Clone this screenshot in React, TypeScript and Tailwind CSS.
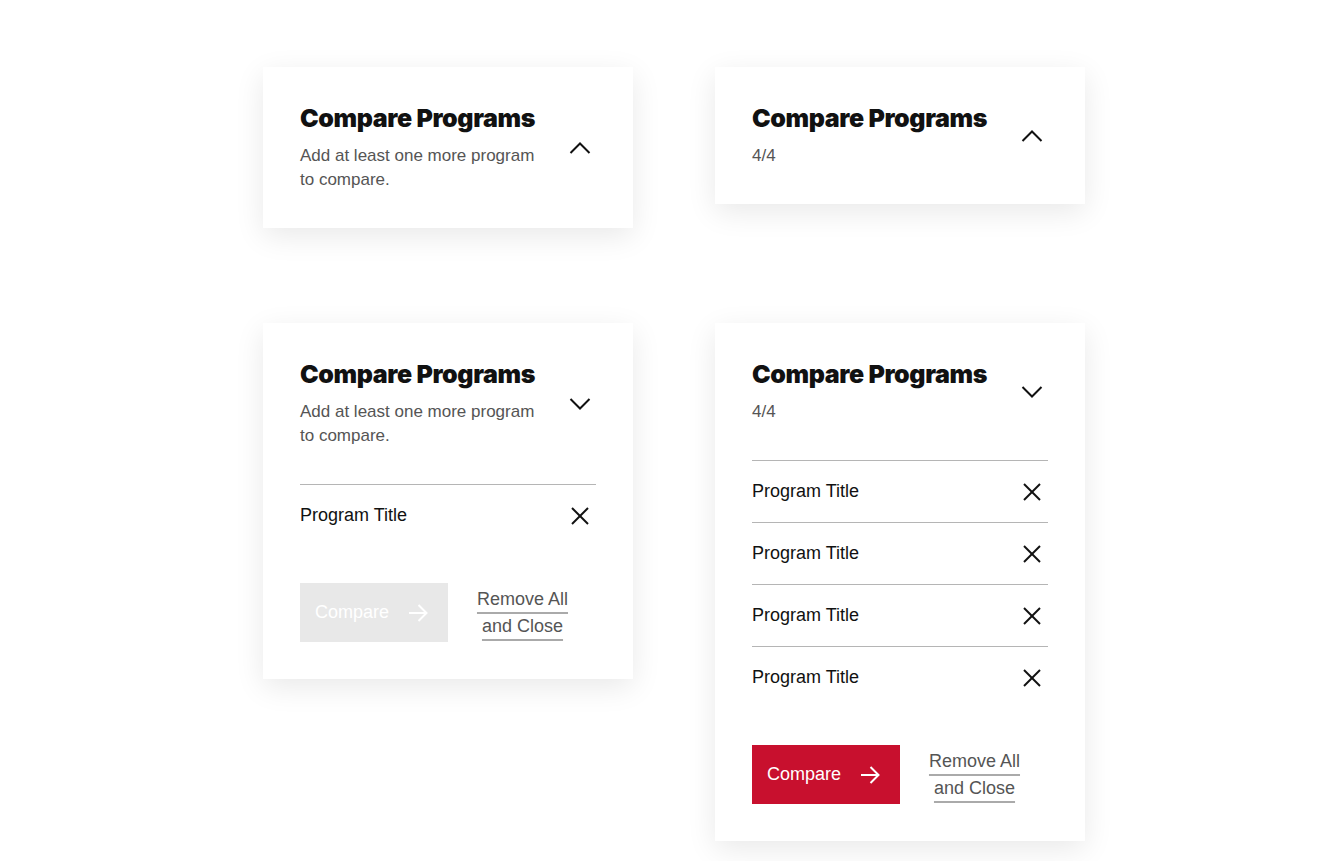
const body = { fontFamily: '"Liberation Sans", Arial, sans-serif' };
const heading = { fontFamily: 'Inter, "Liberation Sans", sans-serif' };

function Chevron({ up }: { up: boolean }) {
  return (
    <svg width="22" height="12" viewBox="0 0 22 12" fill="none" stroke="#111" strokeWidth="2" className={up ? '' : 'rotate-180'}>
      <polyline points="1.5,11 11,1.5 20.5,11" />
    </svg>
  );
}

function CloseIcon() {
  return (
    <svg width="18" height="18" viewBox="0 0 18 18" fill="none" stroke="#111" strokeWidth="2">
      <line x1="1" y1="1" x2="17" y2="17" />
      <line x1="17" y1="1" x2="1" y2="17" />
    </svg>
  );
}

function Arrow() {
  return (
    <svg width="19" height="18" viewBox="0 0 19 18" fill="none" stroke="currentColor" strokeWidth="2">
      <line x1="0" y1="9" x2="17.5" y2="9" />
      <polyline points="9.5,1 17.5,9 9.5,17" />
    </svg>
  );
}

interface CardProps {
  subtitle: string;
  open: boolean;
  items?: number;
  active?: boolean;
}

function CompareCard({ subtitle, open, items = 0, active = false }: CardProps) {
  return (
    <div className="bg-white w-[370px] px-[37px] shadow-[0_8px_28px_rgba(0,0,0,0.09)]" style={body}>
      <div className="flex items-center justify-between pt-9 pb-9">
        <div className="w-[250px]">
          <h2 className="text-[25px] leading-[30px] font-black tracking-[-0.015em] text-[#111]" style={heading}>
            Compare Programs
          </h2>
          <p className="mt-[11px] text-[17px] leading-6 text-[#555]">{subtitle}</p>
        </div>
        <div className="w-6 flex justify-center mr-1">
          <Chevron up={!open} />
        </div>
      </div>
      {open && (
        <>
          <div>
            {Array.from({ length: items }).map((_, i) => (
              <div key={i} className="h-[62px] border-t border-[#b5b5b5] flex items-center justify-between">
                <span className="text-[18px] leading-6 text-[#111] -mt-[2px]">Program Title</span>
                <div className="w-6 flex justify-center mr-1">
                  <CloseIcon />
                </div>
              </div>
            ))}
          </div>
          <div className="flex items-center pt-[37px] pb-[37px]">
            <button
              className={`w-[148px] h-[59px] flex items-center justify-between pl-[15px] pr-5 text-[18px] ${
                active ? 'bg-[#c8102e] text-white' : 'bg-[#e8e8e8] text-white'
              }`}
            >
              <span>Compare</span>
              <Arrow />
            </button>
            <div className="ml-[28px] w-[93px] text-center text-[18px] leading-[27px] text-[#555] underline decoration-[#aaa] decoration-[1.5px] underline-offset-[7px]">
              Remove All and Close
            </div>
          </div>
        </>
      )}
    </div>
  );
}

export default function App() {
  return (
    <div className="min-h-screen bg-white pl-[263px] pt-[67px]">
      <div className="grid grid-cols-[370px_370px] gap-x-[82px] gap-y-[95px] items-start">
        <CompareCard subtitle="Add at least one more program to compare." open={false} />
        <CompareCard subtitle="4/4" open={false} />
        <CompareCard subtitle="Add at least one more program to compare." open items={1} />
        <CompareCard subtitle="4/4" open items={4} active />
      </div>
    </div>
  );
}
